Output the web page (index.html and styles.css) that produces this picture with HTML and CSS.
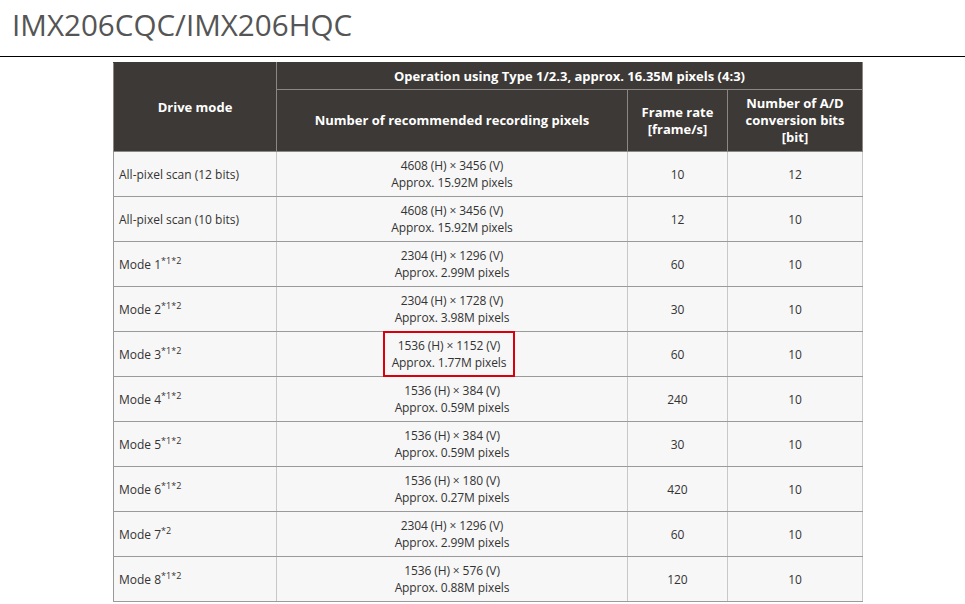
FILE: index.html
```html
<!DOCTYPE html>
<html>
<head>
<meta charset="utf-8">
<link rel="stylesheet" href="styles.css">
</head>
<body>
<h1 class="title">IMX206CQC/IMX206HQC</h1>
<div class="wrap">
<table class="spec">
<colgroup><col class="c1"><col class="c2"><col class="c3"><col class="c4"></colgroup>
<thead>
<tr class="h1row"><th rowspan="2" class="hd">Drive mode</th><th colspan="3">Operation using Type 1/2.3, approx. 16.35M pixels (4:3)</th></tr>
<tr class="h2row"><th>Number of recommended recording pixels</th><th>Frame rate<br>[frame/s]</th><th>Number of A/D<br>conversion bits<br>[bit]</th></tr>
</thead>
<tbody>
<tr><td class="l">All-pixel scan (12 bits)</td><td>4608 (H) × 3456 (V)<br>Approx. 15.92M pixels</td><td>10</td><td>12</td></tr>
<tr><td class="l">All-pixel scan (10 bits)</td><td>4608 (H) × 3456 (V)<br>Approx. 15.92M pixels</td><td>12</td><td>10</td></tr>
<tr><td class="l">Mode 1<sup>*1*2</sup></td><td>2304 (H) × 1296 (V)<br>Approx. 2.99M pixels</td><td>60</td><td>10</td></tr>
<tr><td class="l">Mode 2<sup>*1*2</sup></td><td>2304 (H) × 1728 (V)<br>Approx. 3.98M pixels</td><td>30</td><td>10</td></tr>
<tr><td class="l">Mode 3<sup>*1*2</sup></td><td><span class="mark">1536 (H) × 1152 (V)<br>Approx. 1.77M pixels</span></td><td>60</td><td>10</td></tr>
<tr><td class="l">Mode 4<sup>*1*2</sup></td><td>1536 (H) × 384 (V)<br>Approx. 0.59M pixels</td><td>240</td><td>10</td></tr>
<tr><td class="l">Mode 5<sup>*1*2</sup></td><td>1536 (H) × 384 (V)<br>Approx. 0.59M pixels</td><td>30</td><td>10</td></tr>
<tr><td class="l">Mode 6<sup>*1*2</sup></td><td>1536 (H) × 180 (V)<br>Approx. 0.27M pixels</td><td>420</td><td>10</td></tr>
<tr><td class="l">Mode 7<sup>*2</sup></td><td>2304 (H) × 1296 (V)<br>Approx. 2.99M pixels</td><td>60</td><td>10</td></tr>
<tr><td class="l">Mode 8<sup>*1*2</sup></td><td>1536 (H) × 576 (V)<br>Approx. 0.88M pixels</td><td>120</td><td>10</td></tr>
</tbody>
</table>
</div>
</body>
</html>
```
FILE: styles.css
```css
html, body { margin: 0; padding: 0; background: #fff; }
body { font-family: "Open Sans", "Noto Sans", sans-serif; color: #333; }
.title {
  margin: 0;
  padding: 5px 0 0 12px;
  height: 51px;
  font-size: 29.6px;
  font-weight: 400;
  line-height: 40px;
  color: #555;
  border-bottom: 1px solid #000;
}
.wrap { padding: 5px 0 0 113px; }
.spec {
  border-collapse: collapse;
  table-layout: fixed;
  width: 749px;
  font-size: 12px;
}
.c1 { width: 163px; }
.c2 { width: 351px; }
.c3 { width: 100px; }
.c4 { width: 135px; }
.spec th {
  background: #3d3936;
  color: #fff;
  font-weight: 700;
  font-size: 13px;
  border: 1px solid #8a8785;
  line-height: 17px;
  padding: 0 2px;
}
.h1row th { height: 26px; }
.h2row th { height: 61px; }
.spec thead tr:first-child th { border-top-color: #3d3936; }
.spec td {
  background: #f7f7f7;
  border-left: 1px solid #c8c8c8;
  border-right: 1px solid #c8c8c8;
  border-bottom: 1px solid #9a9a9a;
  height: 44px;
  padding: 0 4px;
  text-align: center;
  line-height: 17px;
  color: #333;
  letter-spacing: -0.1px;
}
.spec td.l { text-align: left; padding-left: 5px; letter-spacing: 0; }
.spec td:first-child { border-left-color: #999; }
sup { font-size: 9px; line-height: 0; vertical-align: 5px; }
.mark {
  display: inline-block;
  border: 2px solid #d8000d;
  padding: 4px 7px 4px;
  margin: -1px 6px -1px 0;
}
```
